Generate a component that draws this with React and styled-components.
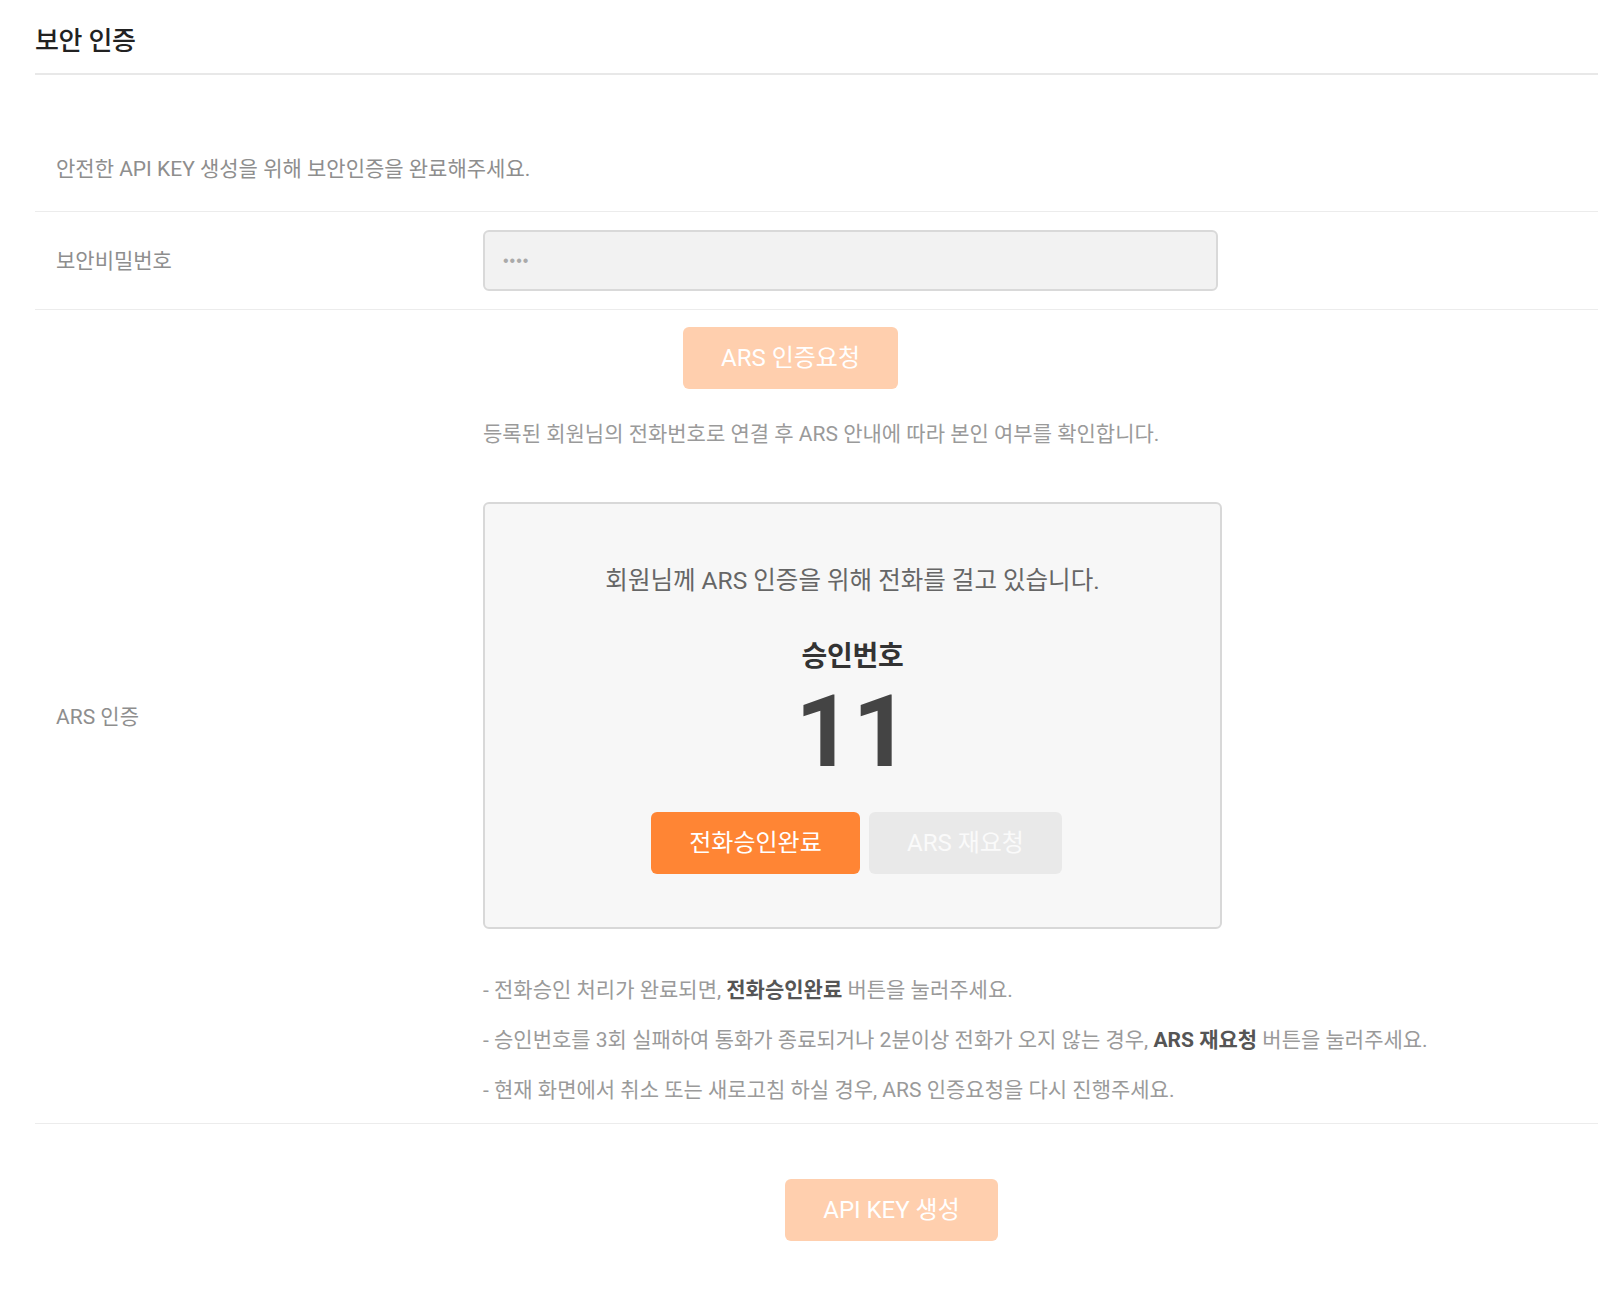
import React from 'react';
import styled, { createGlobalStyle } from 'styled-components';

const GlobalStyle = createGlobalStyle`
    body {
        margin: 0;
        background: #fff;
        overflow-x: hidden;
        font-family: Roboto, "Noto Sans CJK KR", sans-serif;
    }
`;

const Page = styled.div`
    padding-left: 35px;
`;

const Header = styled.h2`
    margin: 0;
    padding: 24px 0 15px;
    font-size: 26px;
    line-height: 34px;
    font-weight: 500;
    letter-spacing: -0.3px;
    color: #222;
    border-bottom: 2px solid #e8e8e8;
`;

const Intro = styled.p`
    margin: 0;
    padding: 80px 0 28px 21px;
    font-size: 21px;
    line-height: 28px;
    color: #8e8e8e;
    border-bottom: 1px solid #ececec;
`;

const Row = styled.div`
    display: grid;
    grid-template-columns: 448px 1fr;
    align-items: center;
    padding: ${p => p.$pad || '0'};
    border-bottom: 1px solid #ececec;
`;

const Label = styled.div`
    padding-left: 21px;
    padding-bottom: 3px;
    font-size: 21px;
    color: #8e8e8e;
`;

const Input = styled.input`
    box-sizing: border-box;
    width: 735px;
    height: 61px;
    padding: 0 18px;
    background: #f2f2f2;
    border: 2px solid #d9d9d9;
    border-radius: 6px;
    font-size: 16px;
    color: #aaa;
    letter-spacing: 1px;
    outline: none;
`;

const Content = styled.div`
    padding-top: 17px;
    display: flex;
    flex-direction: column;
    align-items: flex-start;
`;

const Button = styled.button`
    box-sizing: border-box;
    width: ${p => p.$w}px;
    height: 62px;
    padding: 0 0 5px;
    border: none;
    border-radius: 6px;
    font-family: inherit;
    font-size: 24px;
    font-weight: 400;
    color: ${p => p.$color || '#fff'};
    background: ${p => p.$bg};
    cursor: pointer;
`;

const Shift = styled.div`
    margin-left: ${p => p.$left}px;
`;

const Help = styled.p`
    margin: 31px 0 0;
    font-size: 21px;
    line-height: 28px;
    color: #9a9a9a;
`;

const CallBox = styled.div`
    box-sizing: border-box;
    width: 739px;
    margin-top: 54px;
    padding: 61px 0 53px;
    background: #f7f7f7;
    border: 2px solid #d8d8d8;
    border-radius: 6px;
    display: flex;
    flex-direction: column;
    align-items: center;
`;

const Calling = styled.div`
    font-size: 24.5px;
    line-height: 32px;
    color: #666;
`;

const CodeLabel = styled.div`
    margin-top: 43px;
    font-size: 28px;
    line-height: 34px;
    font-weight: 700;
    color: #333;
    letter-spacing: -0.3px;
`;

const Code = styled.div`
    margin-top: 8px;
    font-size: 100px;
    line-height: 100px;
    font-weight: 700;
    color: #444;
`;

const Actions = styled.div`
    margin-top: 30px;
    padding-left: 8px;
    display: flex;
    gap: 9px;
`;

const Notes = styled.ul`
    margin: 36px 0 8px;
    padding: 0;
    list-style: none;
`;

const Note = styled.li`
    font-size: 21px;
    line-height: 50px;
    color: #9a9a9a;

    b {
        color: #555;
        font-weight: 700;
    }
`;

const Footer = styled.div`
    padding: 55px 0 40px 750px;
`;

export default function App() {
    return (
        <Page>
            <GlobalStyle />
            <Header>보안 인증</Header>
            <Intro>안전한 API KEY 생성을 위해 보안인증을 완료해주세요.</Intro>
            <Row $pad="18px 0">
                <Label>보안비밀번호</Label>
                <Input type="password" defaultValue="1234" />
            </Row>
            <Row>
                <Label>ARS 인증</Label>
                <Content>
                    <Shift $left={200}>
                        <Button $w={215} $bg="#ffcfae">ARS 인증요청</Button>
                    </Shift>
                    <Help>등록된 회원님의 전화번호로 연결 후 ARS 안내에 따라 본인 여부를 확인합니다.</Help>
                    <CallBox>
                        <Calling>회원님께 ARS 인증을 위해 전화를 걸고 있습니다.</Calling>
                        <CodeLabel>승인번호</CodeLabel>
                        <Code>11</Code>
                        <Actions>
                            <Button $w={209} $bg="#ff8534">전화승인완료</Button>
                            <Button $w={193} $bg="#e9e9e9" $color="#fafafa">ARS 재요청</Button>
                        </Actions>
                    </CallBox>
                    <Notes>
                        <Note>- 전화승인 처리가 완료되면, <b>전화승인완료</b> 버튼을 눌러주세요.</Note>
                        <Note>- 승인번호를 3회 실패하여 통화가 종료되거나 2분이상 전화가 오지 않는 경우, <b>ARS 재요청</b> 버튼을 눌러주세요.</Note>
                        <Note>- 현재 화면에서 취소 또는 새로고침 하실 경우, ARS 인증요청을 다시 진행주세요.</Note>
                    </Notes>
                </Content>
            </Row>
            <Footer>
                <Button $w={213} $bg="#ffcfae">API KEY 생성</Button>
            </Footer>
        </Page>
    );
}
